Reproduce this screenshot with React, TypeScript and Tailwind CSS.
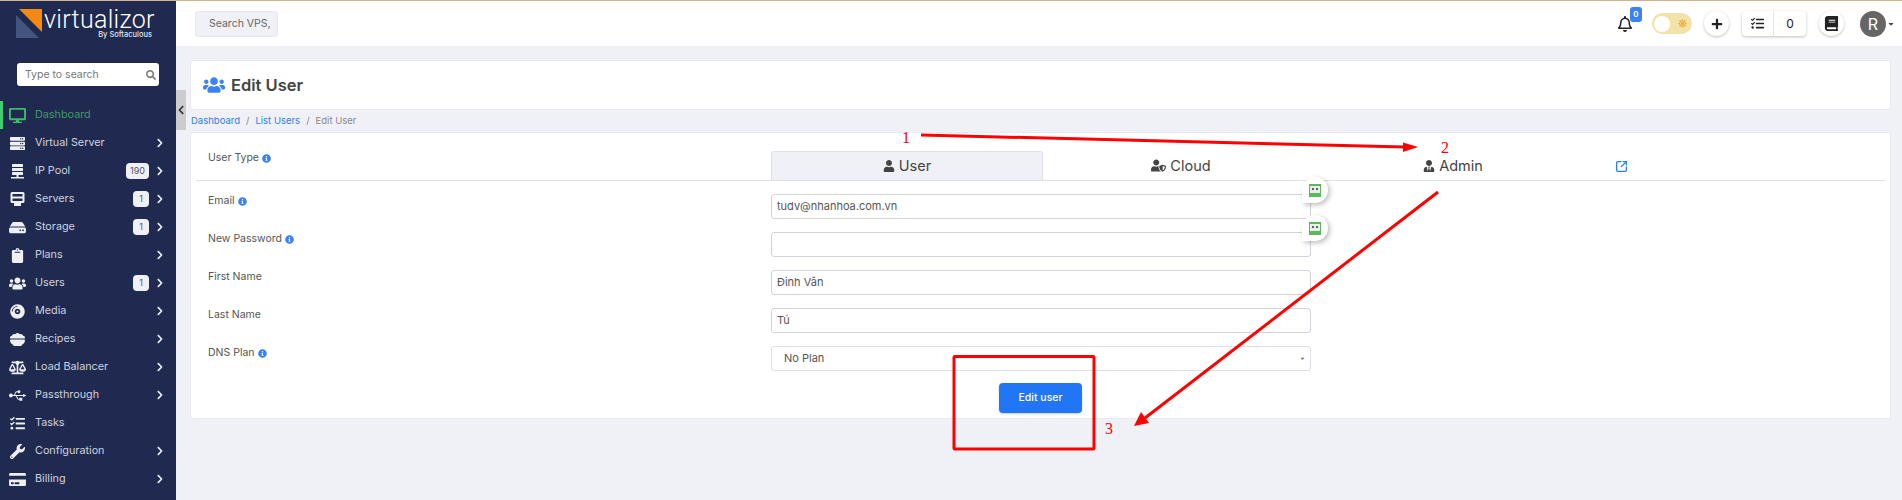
import { SquareArrowOutUpRight } from 'lucide-react';
import {
	FaBalanceScale,
	FaBook,
	FaChevronLeft,
	FaChevronRight,
	FaClipboard,
	FaCompactDisc,
	FaCreditCard,
	FaDesktop,
	FaHdd,
	FaInfoCircle,
	FaPlus,
	FaRegBell,
	FaSearch,
	FaServer,
	FaTasks,
	FaUsb,
	FaUser,
	FaUserShield,
	FaUsers,
	FaUserTie,
	FaWrench,
	FaSun,
	FaCaretDown,
} from 'react-icons/fa';
import { FaBowlFood } from 'react-icons/fa6';

function IpPoolIcon({ className }: { size?: number; className?: string }) {
	return (
		<svg className={className} width="15" height="15" viewBox="0 0 15 15" fill="currentColor">
			<rect x="2" y="0" width="11" height="3" rx="0.5" />
			<rect x="2" y="4" width="11" height="3" rx="0.5" />
			<rect x="2" y="8" width="11" height="3" rx="0.5" />
			<rect x="6.5" y="11" width="2" height="2" />
			<rect x="1" y="13" width="13" height="1.5" />
		</svg>
	);
}

function ServersIcon({ className }: { size?: number; className?: string }) {
	return (
		<svg className={className} width="15" height="15" viewBox="0 0 15 15" fill="currentColor">
			<path d="M2 0h11a1.500 1.500 0 0 1 1.500 1.500v8a1.500 1.500 0 0 1-1.500 1.500h-11a1.500 1.500 0 0 1-1.500-1.500v-8a1.500 1.500 0 0 1 1.500-1.500zM2.500 2v2.500h10v-2.500zM2.500 6.500v2.500h10v-2.500z" fillRule="evenodd" />
			<rect x="4" y="11" width="7" height="3" />
		</svg>
	);
}

const menu = [
	{ label: 'Virtual Server', icon: FaServer, arrow: true },
	{ label: 'IP Pool', icon: IpPoolIcon, badge: '190', arrow: true },
	{ label: 'Servers', icon: ServersIcon, badge: '1', arrow: true },
	{ label: 'Storage', icon: FaHdd, badge: '1', arrow: true },
	{ label: 'Plans', icon: FaClipboard, arrow: true },
	{ label: 'Users', icon: FaUsers, badge: '1', arrow: true },
	{ label: 'Media', icon: FaCompactDisc, arrow: true },
	{ label: 'Recipes', icon: FaBowlFood, arrow: true },
	{ label: 'Load Balancer', icon: FaBalanceScale, arrow: true },
	{ label: 'Passthrough', icon: FaUsb, arrow: true },
	{ label: 'Tasks', icon: FaTasks },
	{ label: 'Configuration', icon: FaWrench, arrow: true },
	{ label: 'Billing', icon: FaCreditCard, arrow: true },
];

function Logo() {
	return (
		<div className="relative h-[47px] shrink-0">
			<svg className="absolute left-[15px] top-[6px]" width="30" height="32" viewBox="0 0 30 32">
				<polygon points="1,8 1,31 24,31" fill="#43557e" />
				<polygon points="4,2 27,2 27,25" fill="#f6890f" />
			</svg>
			<div className="absolute left-[44px] top-[8px] font-[Roboto,sans-serif] text-[25px] leading-[22px] font-light tracking-[0.3px] text-white">
				virtualizor
			</div>
			<div className="absolute right-[24px] top-[30px] text-[7.5px] leading-[8px] font-medium text-[#dfe3ee]">
				By Softaculous
			</div>
		</div>
	);
}

function Sidebar() {
	return (
		<aside className="flex h-full w-[176px] shrink-0 flex-col bg-[#202a50]">
			<Logo />
			<div className="mx-[17px] mt-[15px] flex h-[23px] shrink-0 items-center justify-between rounded-[3px] bg-white pl-2 pr-[3px] text-[10.5px] text-[#777]">
				<span>Type to search</span>
				<FaSearch size={10} className="text-[#777]" />
			</div>
			<div className="mt-[15px] flex h-7 shrink-0 items-center border-l-[3px] border-[#3ecf6e] pl-[6px] text-[10.8px] text-[#3d9a63]">
				<FaDesktop size={17} className="w-[17px] text-[#40b96f]" />
				<span className="ml-[9px]">Dashboard</span>
			</div>
			{menu.map((item) => (
				<div key={item.label} className="flex h-7 shrink-0 items-center pl-[9px] pr-[11px] text-[10.8px] text-[#cfd2de]">
					<item.icon size={15} className="w-[17px] text-[#eef0f5]" />
					<span className="ml-[9px] flex-1">{item.label}</span>
					{item.badge && (
						<span className="mr-[6px] flex h-[16px] min-w-[16px] items-center justify-center rounded-[4px] bg-[#eef0f5] px-1 text-[9px] text-[#555]">
							{item.badge}
						</span>
					)}
					{item.arrow && <FaChevronRight size={10} className="text-[#eef0f5]" />}
				</div>
			))}
		</aside>
	);
}

function Header() {
	return (
		<header className="flex h-[45px] shrink-0 items-center bg-white pl-[19px] pr-[7px]">
			<div className="flex h-[26px] w-[83px] items-center rounded-[3px] border border-[#e6e8f0] bg-[#f0f1f7] pl-[13px] text-[10.5px] text-[#666]">
				Search VPS,
			</div>
			<div className="relative ml-auto flex items-center">
				<div className="relative mr-[19px] flex w-[16px] justify-center">
					<FaRegBell size={16} className="text-[#222]" />
					<span className="absolute left-[13px] top-[-9px] flex h-[15px] w-3 items-center justify-center rounded-[3px] bg-[#3b82f6] text-[8px] font-semibold text-white">
						0
					</span>
				</div>
				<div className="flex h-[21px] w-[40px] items-center justify-between rounded-full bg-[#f3e2a9] px-[2px]">
					<span className="h-[16px] w-[16px] rounded-full bg-white" />
					<FaSun size={9} className="mr-[3px] text-[#eeb23c]" />
				</div>
				<div className="ml-[12px] flex h-[25px] w-[25px] items-center justify-center rounded-full bg-white shadow-[0_1px_3px_rgba(0,0,0,0.25)]">
					<FaPlus size={12} className="text-[#222]" />
				</div>
				<div className="ml-[13px] flex h-[25px] w-[64px] items-center rounded-[4px] bg-white text-[12px] text-[#222] shadow-[0_1px_3px_rgba(0,0,0,0.25)]">
					<div className="flex h-full w-[32px] items-center justify-center border-r border-[#e5e5e5]">
						<FaTasks size={13} />
					</div>
					<div className="flex-1 text-center">0</div>
				</div>
				<div className="ml-[13px] flex h-[25px] w-[25px] items-center justify-center rounded-full bg-white shadow-[0_1px_3px_rgba(0,0,0,0.25)]">
					<FaBook size={15} className="text-[#222]" />
				</div>
				<div className="ml-[16px] flex h-[26px] w-[26px] items-center justify-center rounded-full bg-[#666] text-[16px] text-white">
					R
				</div>
				<FaCaretDown size={8} className="ml-[1px] text-[#444]" />
			</div>
		</header>
	);
}

function Info() {
	return <FaInfoCircle size={9} className="ml-[3px] inline-block text-[#3b82f6]" />;
}

function BitwardenBubble() {
	return (
		<div className="absolute right-[-18px] top-[-18px] z-10 flex h-[26px] w-[26px] items-center justify-center rounded-full rounded-bl-none bg-white shadow-[2px_2px_5px_rgba(0,0,0,0.25)]">
			<svg width="12" height="13" viewBox="0 0 12 13">
				<rect x="0" y="0" width="12" height="13" fill="#5cb85c" />
				<rect x="1" y="2" width="10" height="7" fill="#e8efe8" />
				<circle cx="4" cy="5" r="1" fill="#333" />
				<circle cx="8" cy="5" r="1" fill="#333" />
			</svg>
		</div>
	);
}

function FormRow({ label, info, value, bubble }: { label: string; info?: boolean; value?: string; bubble?: boolean }) {
	return (
		<div className="flex h-[38px] pl-[12px]">
			<div className="w-[563px] pt-[4px] text-[10.5px] leading-[14px] text-[#555]">
				{label}
				{info && <Info />}
			</div>
			<div className="relative mt-[4px] flex h-[25px] w-[540px] items-center rounded-[3px] border border-[#ced4da] bg-white pl-[5px] text-[11px] text-[#555]">
				{value}
				{bubble && <BitwardenBubble />}
			</div>
		</div>
	);
}

function Annotations() {
	return (
		<div className="pointer-events-none absolute inset-0 z-20">
			<svg width="1902" height="500" className="absolute left-0 top-0">
				<line x1="921" y1="134" x2="1405" y2="146" stroke="#f00" strokeWidth="3" />
				<polygon points="1418,146 1403,141.500 1403,151" fill="#f00" />
				<line x1="1438" y1="191" x2="1145" y2="417" stroke="#f00" strokeWidth="3" />
				<polygon points="1134,425 1141,411 1149,422" fill="#f00" />
				<rect x="954" y="355.500" width="140" height="92.500" rx="1" fill="none" stroke="#f00" strokeWidth="3" />
			</svg>
			<span className="absolute left-[902px] top-[129px] font-['Liberation_Serif',serif] text-[16px] leading-[16px] text-[#f00]">1</span>
			<span className="absolute left-[1441px] top-[139px] font-['Liberation_Serif',serif] text-[16px] leading-[16px] text-[#f00]">2</span>
			<span className="absolute left-[1105px] top-[420px] font-['Liberation_Serif',serif] text-[16px] leading-[16px] text-[#f00]">3</span>
		</div>
	);
}

export default function App() {
	return (
		<div className="relative h-[500px] w-[1902px] overflow-hidden border-t border-[#d0b48c] bg-[#f0f1f7] font-['Inter',sans-serif]">
			<div className="flex h-full">
				<Sidebar />
				<main className="flex min-w-0 flex-1 flex-col">
					<Header />
					<div className="relative pl-[14px] pr-[11px] pt-[14px]">
						<div className="absolute left-0 top-[44px] flex h-[40px] w-[10px] items-center justify-center bg-[#ccc]">
							<FaChevronLeft size={10} className="text-[#333]" />
						</div>
						<div className="flex h-[50px] items-center rounded-[3px] border border-[#e8e9ef] bg-white pl-[12px]">
							<FaUsers size={22} className="text-[#3b82f6]" />
							<h1 className="ml-[6px] text-[16.5px] font-semibold text-[#444]">Edit User</h1>
						</div>
						<div className="flex h-[22px] items-center pl-[1px] text-[9.5px] text-[#888]">
							<span className="text-[#2f80ed]">Dashboard</span>
							<span className="mx-[6px]">/</span>
							<span className="text-[#2f80ed]">List Users</span>
							<span className="mx-[6px]">/</span>
							<span>Edit User</span>
						</div>
						<section className="h-[287px] rounded-[3px] border border-[#e8e9ef] bg-white px-[5px] pt-[13px]">
							<div className="flex h-[35px] border-b border-[#dfe0e8] pl-[12px]">
								<div className="w-[563px] pt-[5px] text-[10.5px] leading-[14px] text-[#555]">
									User Type
									<Info />
								</div>
								<div className="mt-[5px] flex h-[29px] w-[272px] items-center justify-center gap-[4px] rounded-t-[3px] border border-b-0 border-[#dfe0e8] bg-[#f0f1f7] text-[14.5px] text-[#444]">
									<FaUser size={12} /> User
								</div>
								<div className="mt-[5px] flex h-[29px] w-[276px] items-center justify-center gap-[4px] text-[14.5px] text-[#444]">
									<FaUserShield size={15} /> Cloud
								</div>
								<div className="mt-[5px] flex h-[29px] w-[268px] items-center justify-center gap-[4px] text-[14.5px] text-[#444]">
									<FaUserTie size={12} /> Admin
								</div>
								<SquareArrowOutUpRight size={13} strokeWidth={2.5} className="ml-[28px] mt-[14px] text-[#2f80ed]" />
							</div>
							<div className="pt-[9px]">
								<FormRow label="Email" info value="tudv@nhanhoa.com.vn" bubble />
								<FormRow label="New Password" info bubble />
								<FormRow label="First Name" value="Đinh Văn" />
								<FormRow label="Last Name" value="Tú" />
								<div className="flex h-[38px] pl-[12px]">
									<div className="w-[563px] pt-[4px] text-[10.5px] leading-[14px] text-[#555]">
										DNS Plan
										<Info />
									</div>
									<div className="relative mt-[4px] flex h-[25px] w-[540px] items-center justify-between rounded-[3px] border border-[#dfe0e8] bg-white pl-[12px] pr-[4px] text-[11px] text-[#555]">
										No Plan
										<FaCaretDown size={7} className="text-[#777]" />
									</div>
								</div>
							</div>
							<div className="mt-[3px] flex pl-[803px]">
								<button className="h-[30px] w-[83px] rounded-[4px] bg-[#2176f5] text-[10.5px] font-medium text-white shadow-[0_1px_2px_rgba(0,0,0,0.2)]">
									Edit user
								</button>
							</div>
						</section>
					</div>
				</main>
			</div>
			<Annotations />
		</div>
	);
}
